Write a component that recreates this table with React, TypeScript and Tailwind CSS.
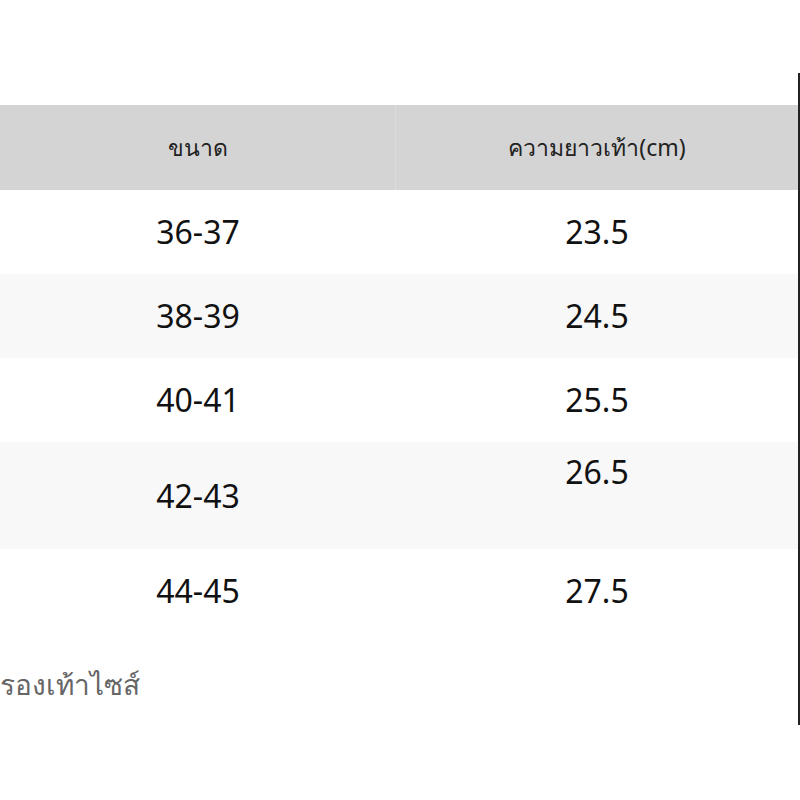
const rows = [
  { size: '36-37', length: '23.5' },
  { size: '38-39', length: '24.5' },
  { size: '40-41', length: '25.5' },
  { size: '42-43', length: '26.5', tall: true },
  { size: '44-45', length: '27.5' },
];

export default function App() {
  return (
    <div className="w-[800px] h-[800px] bg-white pt-[73px] font-['Noto_Sans','Noto_Sans_CJK_SC',sans-serif] text-[#111]">
      <div className="w-[800px] h-[652px] border-r-2 border-[#222] pt-[32px]">
        <div className="grid grid-cols-[396px_402px]">
          <div className="h-[85px] bg-[#d4d4d4] border-r border-[#dcdcdc] flex items-center justify-center text-[23px] text-[#222]">
            ขนาด
          </div>
          <div className="h-[85px] bg-[#d4d4d4] flex items-center justify-center text-[23px] text-[#222]">
            ความยาวเท้า(cm)
          </div>
          {rows.map((r, i) => {
            const bg = i % 2 === 1 ? 'bg-[#f8f8f8]' : 'bg-white';
            return r.tall ? (
              <div key={r.size} className="contents">
                <div className={`h-[107px] ${bg} flex items-center justify-center text-[32px]`}>{r.size}</div>
                <div className={`h-[107px] ${bg} flex justify-center pt-[6px] text-[32px]`}>{r.length}</div>
              </div>
            ) : (
              <div key={r.size} className="contents">
                <div className={`h-[84px] ${bg} flex items-center justify-center text-[32px]`}>{r.size}</div>
                <div className={`h-[84px] ${bg} flex items-center justify-center text-[32px]`}>{r.length}</div>
              </div>
            );
          })}
        </div>
        <div className="mt-[37px] text-[28px] text-[#666] leading-none">รองเท้าไซส์</div>
      </div>
    </div>
  );
}
